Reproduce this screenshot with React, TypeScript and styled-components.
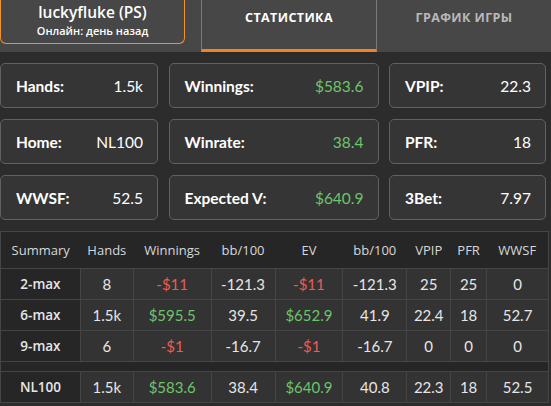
import styled, { createGlobalStyle } from 'styled-components';

const GlobalStyle = createGlobalStyle`
    body {
        margin: 0;
        background: #2c2c2c;
        font-family: Lato, "Open Sans", sans-serif;
    }
`;

const Page = styled.div`
    width: 551px;
    height: 406px;
    background: #2c2c2c;
    overflow: hidden;
`;

const Header = styled.header`
    display: flex;
    height: 52px;
    background: #474747;
`;

const Profile = styled.div`
    width: 183px;
    height: 42px;
    border: 1px solid #f39322;
    border-top: none;
    border-radius: 0 0 6px 6px;
    display: flex;
    flex-direction: column;
    align-items: center;
    padding-top: 1px;
    color: #fff;
    font-family: "Open Sans", sans-serif;
`;

const Name = styled.div`
    font-size: 15.5px;
    font-weight: 600;
    line-height: 22px;
`;

const Status = styled.div`
    font-size: 11px;
    font-weight: 600;
    line-height: 16px;
`;

const Tabs = styled.nav`
    display: flex;
    margin-left: 16px;
    flex: 1;
`;

const Tab = styled.div<{ $active?: boolean }>`
    flex: 1;
    text-align: center;
    font-family: "Open Sans", sans-serif;
    font-size: 12.5px;
    font-weight: 700;
    letter-spacing: 0.4px;
    padding-top: 9px;
    box-sizing: border-box;
    color: ${p => (p.$active ? '#fff' : '#b9b9b9')};
    border-left: ${p => (p.$active ? '1px solid #7a7a7a' : 'none')};
    border-right: ${p => (p.$active ? '1px solid #7a7a7a' : 'none')};
    border-bottom: ${p => (p.$active ? '3px solid #f58220' : 'none')};
`;

const Cards = styled.div`
    display: grid;
    grid-template-columns: 158px 210px 157px;
    column-gap: 10.5px;
    row-gap: 11px;
    padding-top: 11px;
`;

const Card = styled.div`
    height: 45px;
    box-sizing: border-box;
    border: 1px solid #616161;
    border-radius: 5px;
    background: #353535;
    display: flex;
    align-items: center;
    justify-content: space-between;
    padding: 0 14px 0 15px;
    font-size: 15.5px;
`;

const Label = styled.span`
    color: #fff;
    font-weight: 700;
`;

const Value = styled.span<{ $tone?: 'up' | 'down' }>`
    color: ${p => (p.$tone === 'up' ? '#6cc56a' : p.$tone === 'down' ? '#ee5a55' : '#fff')};
`;

const Table = styled.table`
    margin-top: 11px;
    width: 549px;
    border-collapse: collapse;
    border: 1px solid #454545;
    color: #e6e6e6;
    text-align: center;
    font-size: 15px;
`;

const Head = styled.th`
    height: 36px;
    background: #262626;
    font-family: "Open Sans", sans-serif;
    font-size: 13px;
    font-weight: 400;
    color: #d8d8d8;
    padding: 0;
    border-bottom: 1px solid #454545;
`;

const RowName = styled.td`
    height: 30px;
    background: #262626;
    font-family: "Open Sans", sans-serif;
    font-size: 13.5px;
    font-weight: 600;
    border: 1px solid #454545;
    padding: 0;
`;

const Cell = styled.td<{ $tone?: 'up' | 'down' }>`
    background: #333;
    border: 1px solid #454545;
    padding: 0;
    color: ${p => (p.$tone === 'up' ? '#6cc56a' : p.$tone === 'down' ? '#ee5a55' : '#e6e6e6')};
`;

const Spacer = styled.td`
    height: 9px;
    background: #262626;
    padding: 0;
`;

type Tone = 'up' | 'down' | undefined;

const cards: [string, string, Tone][] = [
    ['Hands:', '1.5k', undefined],
    ['Winnings:', '$583.6', 'up'],
    ['VPIP:', '22.3', undefined],
    ['Home:', 'NL100', undefined],
    ['Winrate:', '38.4', 'up'],
    ['PFR:', '18', undefined],
    ['WWSF:', '52.5', undefined],
    ['Expected V:', '$640.9', 'up'],
    ['3Bet:', '7.97', undefined],
];

const columns = [
    ['Summary', 80], ['Hands', 53], ['Winnings', 78], ['bb/100', 64],
    ['EV', 68], ['bb/100', 64], ['VPIP', 44], ['PFR', 36], ['WWSF', 62],
] as const;

const tone = (v: string): Tone => (v.startsWith('-$') ? 'down' : v.startsWith('$') ? 'up' : undefined);

const rows = [
    ['2-max', '8', '-$11', '-121.3', '-$11', '-121.3', '25', '25', '0'],
    ['6-max', '1.5k', '$595.5', '39.5', '$652.9', '41.9', '22.4', '18', '52.7'],
    ['9-max', '6', '-$1', '-16.7', '-$1', '-16.7', '0', '0', '0'],
];

const total = ['NL100', '1.5k', '$583.6', '38.4', '$640.9', '40.8', '22.3', '18', '52.5'];

function Row({ data }: { data: string[] }) {
    return (
        <tr>
            <RowName>{data[0]}</RowName>
            {data.slice(1).map((v, i) => (
                <Cell key={i} $tone={tone(v)}>{v}</Cell>
            ))}
        </tr>
    );
}

export default function App() {
    return (
        <Page>
            <GlobalStyle />
            <Header>
                <Profile>
                    <Name>luckyfluke (PS)</Name>
                    <Status>Онлайн: день назад</Status>
                </Profile>
                <Tabs>
                    <Tab $active>СТАТИСТИКА</Tab>
                    <Tab>ГРАФИК ИГРЫ</Tab>
                </Tabs>
            </Header>
            <Cards>
                {cards.map(([label, value, t]) => (
                    <Card key={label}>
                        <Label>{label}</Label>
                        <Value $tone={t}>{value}</Value>
                    </Card>
                ))}
            </Cards>
            <Table>
                <colgroup>
                    {columns.map(([, w], i) => <col key={i} style={{ width: w }} />)}
                </colgroup>
                <thead>
                    <tr>
                        {columns.map(([name], i) => <Head key={i}>{name}</Head>)}
                    </tr>
                </thead>
                <tbody>
                    {rows.map(r => <Row key={r[0]} data={r} />)}
                    <tr><Spacer colSpan={9} /></tr>
                    <Row data={total} />
                </tbody>
            </Table>
        </Page>
    );
}
